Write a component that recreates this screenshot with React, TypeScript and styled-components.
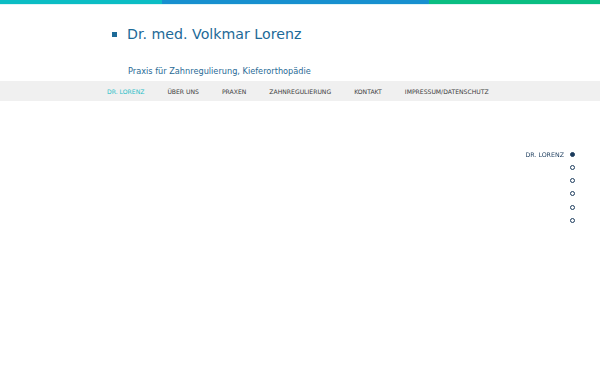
import styled, { createGlobalStyle } from "styled-components";

const Global = createGlobalStyle`
  html, body {
    margin: 0;
    padding: 0;
    background: #ffffff;
    font-family: "DejaVu Sans", Verdana, sans-serif;
  }
`

const Stripe = styled.div`
  display: flex;
  height: 4px;
  border-bottom: 1px solid #dff4f6;
`

const StripePart = styled.div<{ $color: string; $w: string }>`
  background: ${p => p.$color};
  flex: 0 0 ${p => p.$w};
`

const Header = styled.header`
  padding: 18px 0 0 112px;
  height: 76px;
  box-sizing: border-box;
`

const TitleRow = styled.div`
  display: flex;
  align-items: center;
  gap: 10px;
`

const Bullet = styled.span`
  width: 5px;
  height: 5px;
  background: #1d6a98;
`

const Title = styled.h1`
  margin: 0;
  font-size: 14.2px;
  font-weight: 400;
  color: #1d6a98;
  line-height: 22px;
`

const Sub = styled.p`
  margin: 21px 0 0 16px;
  font-size: 8.2px;
  color: #2a6b96;
`

const Nav = styled.nav`
  display: flex;
  align-items: center;
  height: 20px;
  background: #f0f0f0;
  padding-left: 107px;
  gap: 23px;
`

const NavItem = styled.a<{ $active?: boolean }>`
  font-size: 6.1px;
  text-transform: uppercase;
  color: ${p => (p.$active ? "#2bbfc8" : "#3c3c3c")};
  text-decoration: none;
`

const Side = styled.ul`
  position: fixed;
  right: 25px;
  top: 149px;
  margin: 0;
  padding: 0;
  list-style: none;
  display: flex;
  flex-direction: column;
  align-items: flex-end;
  gap: 3.3px;
`

const SideItem = styled.li`
  display: flex;
  align-items: center;
  gap: 6px;
  height: 10px;
`

const SideLabel = styled.span`
  font-size: 6.3px;
  color: #1b3b5c;
`

const Dot = styled.span<{ $on?: boolean }>`
  width: 5px;
  height: 5px;
  border-radius: 50%;
  box-sizing: border-box;
  border: 1px solid #1b3b5c;
  background: ${p => (p.$on ? "#1b3b5c" : "#ffffff")};
`

const links = ["Dr. Lorenz", "Über uns", "Praxen", "Zahnregulierung", "Kontakt", "Impressum/Datenschutz"];

export default function App() {
  return (
    <>
      <Global />
      <Stripe>
        <StripePart $color="#0bbdc4" $w="162px" />
        <StripePart $color="#1890cf" $w="267px" />
        <StripePart $color="#0abe82" $w="171px" />
      </Stripe>
      <Header>
        <TitleRow>
          <Bullet />
          <Title>Dr. med. Volkmar Lorenz</Title>
        </TitleRow>
        <Sub>Praxis für Zahnregulierung, Kieferorthopädie</Sub>
      </Header>
      <Nav>
        {links.map((l, i) => (
          <NavItem key={l} href="#" $active={i === 0}>{l}</NavItem>
        ))}
      </Nav>
      <Side>
        {[0, 1, 2, 3, 4, 5].map(i => (
          <SideItem key={i}>
            {i === 0 && <SideLabel>DR. LORENZ</SideLabel>}
            <Dot $on={i === 0} />
          </SideItem>
        ))}
      </Side>
    </>
  );
}
